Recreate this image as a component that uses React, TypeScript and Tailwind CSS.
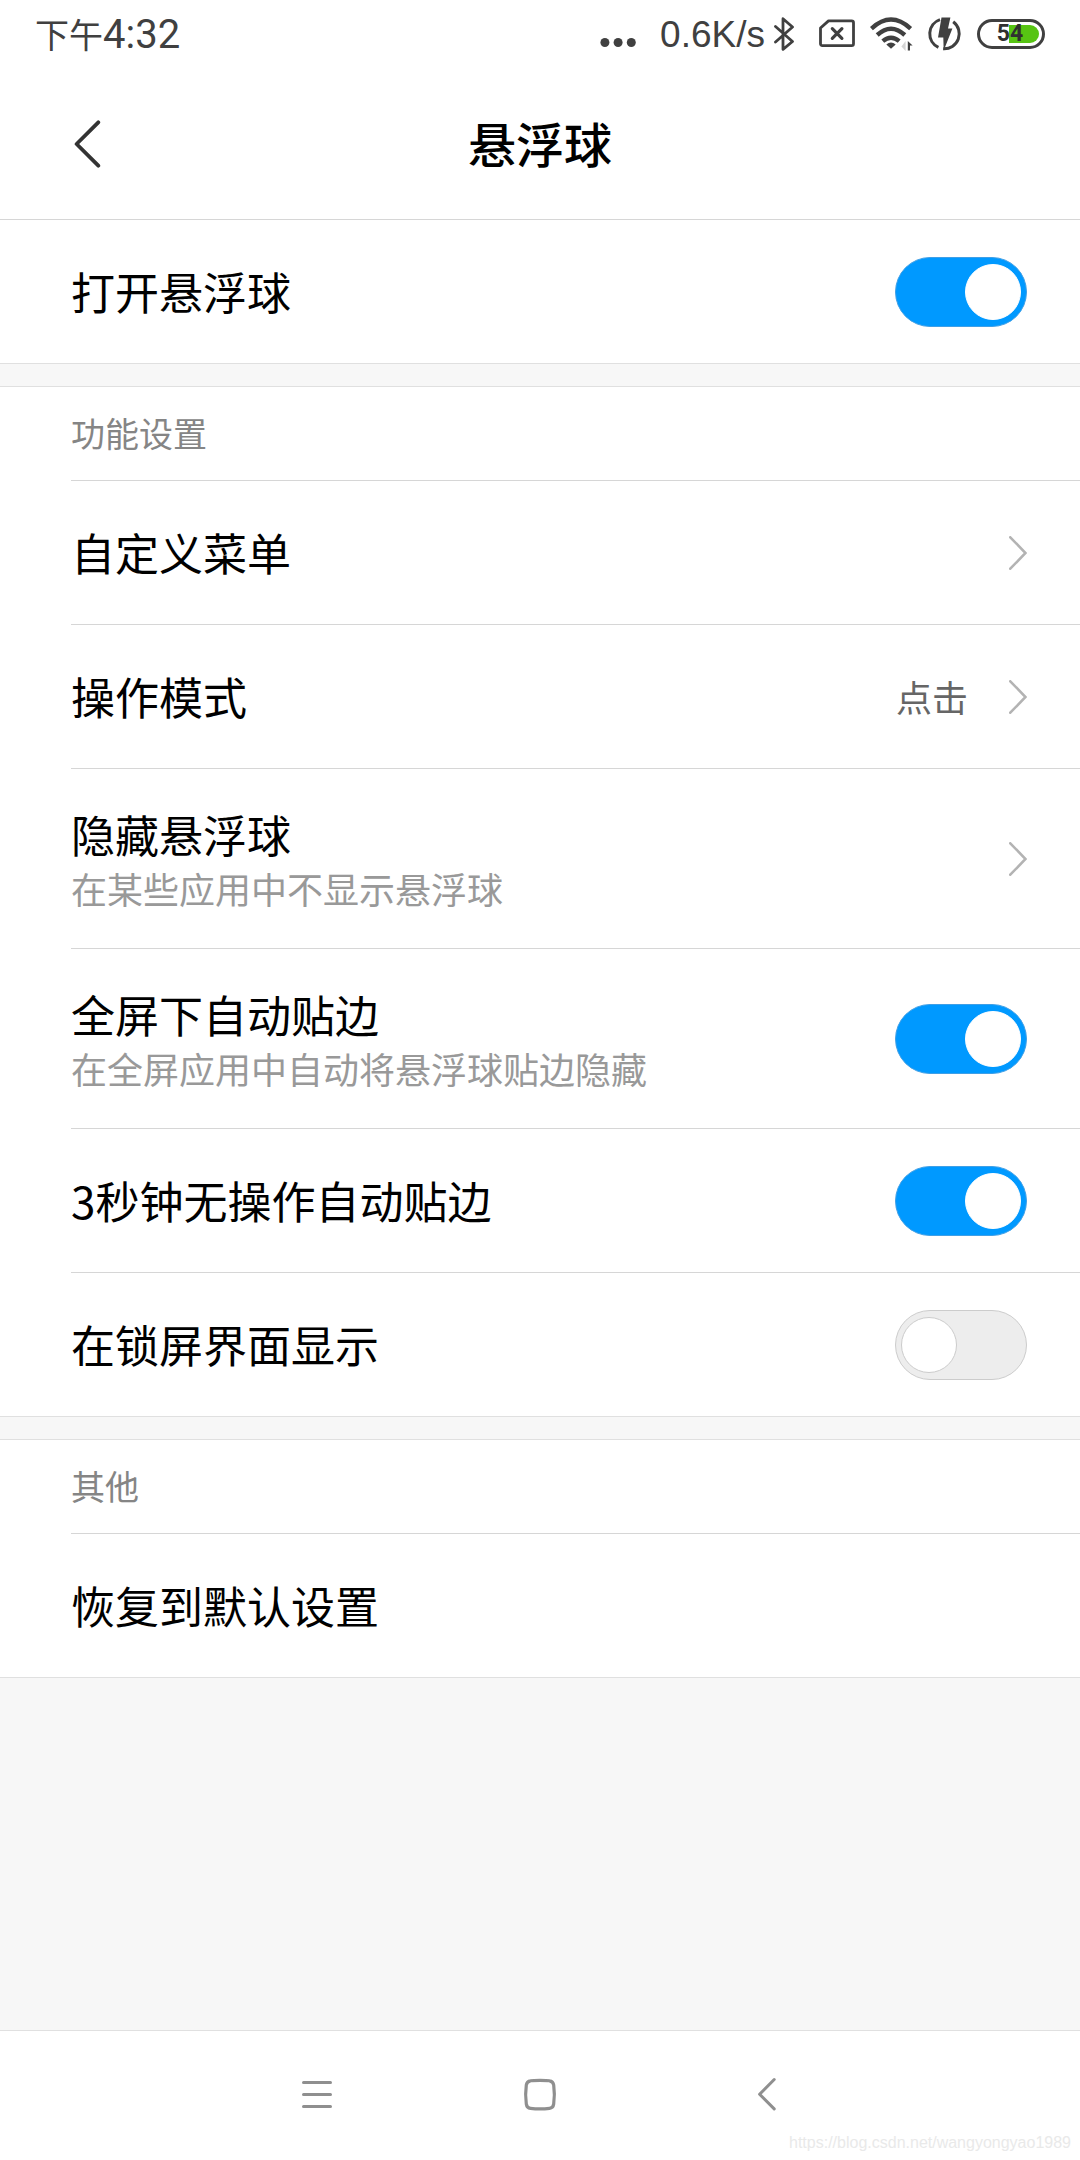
import React, { useState } from "react";

interface RowProps {
  title: string;
  description?: string;
}

interface LinkRowProps extends RowProps {
  value?: string;
  arrow?: boolean;
}

interface SwitchRowProps extends RowProps {
  defaultOn?: boolean;
}

function StatusBar() {
  return (
    <div className="flex h-[72px] items-center justify-between pl-[35px] pr-[35px] pb-[5px] text-[#404040]">
      <div className="flex items-baseline pt-0.5 text-[34px] leading-[48px]">
        <span>下午</span>
        <span className="font-[Roboto] text-[40px]">4:32</span>
      </div>

      <div className="flex items-center">
        {/* MORE NOTIFICATIONS */}
        <svg width="36" height="34" viewBox="0 0 36 34" fill="currentColor" className="mr-[24px]">
          <circle cx="4.9" cy="25.5" r="4.5" />
          <circle cx="18.1" cy="25.5" r="4.5" />
          <circle cx="31.3" cy="25.5" r="4.5" />
        </svg>

        <span className="mr-[9px] pt-0.5 font-['Liberation_Sans'] text-[37px] leading-[48px]">
          0.6K/s
        </span>

        {/* BLUETOOTH */}
        <svg
          width="20"
          height="34"
          viewBox="0 0 20 34"
          fill="none"
          stroke="currentColor"
          strokeWidth="2.8"
          strokeLinecap="round"
          strokeLinejoin="round"
          className="mr-[25px]"
        >
          <path d="M1.5 9.5 18.5 24.5 9 32.3V1.7L18.5 10 1.5 25" />
        </svg>

        {/* NO SIM */}
        <svg
          width="36"
          height="34"
          viewBox="0 0 36 34"
          fill="none"
          stroke="currentColor"
          strokeWidth="2.8"
          strokeLinejoin="round"
          className="mr-[15px]"
        >
          <path d="M9.5 3.9H32.6Q34.5 3.9 34.5 5.8V26.7Q34.5 28.6 32.6 28.6H3.4Q1.5 28.6 1.5 26.7V11Z" />
          <path d="M13.3 11.7 22.9 21.3M22.9 11.7 13.3 21.3" strokeWidth="3.2" strokeLinecap="round" />
        </svg>

        {/* WIFI */}
        <svg
          width="43"
          height="34"
          viewBox="0 0 43 34"
          fill="none"
          stroke="currentColor"
          strokeWidth="4.4"
          className="mr-[15px]"
        >
          <path d="M1.4 11.6Q21 -6.5 40.6 11.6" />
          <path d="M7.2 18Q21 5.5 34.8 18" />
          <path d="M12.8 24.2Q21 17.2 29.2 24.2" />
          <path d="M16.3 27.4Q21 23.8 25.7 27.4L21 31.8Z" fill="currentColor" stroke="none" />
          <path d="M35.6 24V34L31.4 29.5Z" fill="#d4d4d4" stroke="none" />
          <path d="M37.8 33.5V24L42.6 28.6H40V33.5Z" fill="currentColor" stroke="none" />
        </svg>

        {/* FAST CHARGE */}
        <svg
          width="34"
          height="34"
          viewBox="0 0 34 34"
          fill="none"
          stroke="currentColor"
          strokeWidth="3"
          className="mr-[15px]"
        >
          <path d="M12 2.6A15 15 0 0 0 10.4 30.4" />
          <path d="M25.2 4.8A15 15 0 0 1 15.2 31.8" />
          <path d="M13.5 .5H22.4L20 11.5H24.4L15.7 33.5L15.3 20.5H10Z" fill="currentColor" stroke="none" />
        </svg>

        {/* BATTERY */}
        <div className="relative flex h-[30px] w-[68px] items-center justify-center rounded-full border-3 border-[#404040]">
          <div className="absolute inset-y-[3px] left-[29px] right-[3px] rounded-r-full bg-[#57c413]" />
          <span className="relative mr-[2px] font-[Roboto] text-[23px] leading-[24px] font-bold text-[#303030]">
            54
          </span>
        </div>
      </div>
    </div>
  );
}

function RowText({ title, description }: RowProps) {
  return (
    <span className="flex flex-col pb-0.5">
      <span className="text-[44px] leading-[60px] text-black">{title}</span>
      {description && (
        <span className="text-[36px] leading-[48px] text-[#999999]">{description}</span>
      )}
    </span>
  );
}

function LinkRow({ title, description, value, arrow = true }: LinkRowProps) {
  return (
    <li>
      <button
        type="button"
        className={`flex w-full items-center justify-between pr-[53px] text-left ${
          description ? "h-[179px]" : "h-[143px]"
        }`}
      >
        <RowText title={title} description={description} />
        <span className="flex items-center gap-[41px]">
          {value && (
            <span className="pb-0.5 text-[36px] leading-[48px] text-[#666666]">{value}</span>
          )}
          {arrow && (
            <svg
              width="18"
              height="34"
              viewBox="0 0 18 34"
              fill="none"
              stroke="#b3b3b3"
              strokeWidth="2.6"
              strokeLinecap="round"
            >
              <path d="M1.3 1.3 16.5 17 1.3 32.7" />
            </svg>
          )}
        </span>
      </button>
    </li>
  );
}

function SwitchRow({ title, description, defaultOn = false }: SwitchRowProps) {
  const [on, setOn] = useState(defaultOn);

  return (
    <li>
      <label
        className={`flex cursor-pointer items-center justify-between pr-[53px] ${
          description ? "h-[179px]" : "h-[143px]"
        }`}
      >
        <RowText title={title} description={description} />
        <input
          type="checkbox"
          role="switch"
          checked={on}
          onChange={(e) => setOn(e.target.checked)}
          className="flex h-[70px] w-[132px] shrink-0 cursor-pointer appearance-none items-center rounded-full border border-[#cccccc] bg-[#ededed] px-[5px] before:size-[56px] before:rounded-full before:border before:border-[#cccccc] before:bg-white checked:justify-end checked:border-[#3f9fe6] checked:bg-[#0099ff] checked:before:border-white"
        />
      </label>
    </li>
  );
}

function Section({ label, children }: { label?: string; children: React.ReactNode }) {
  return (
    <section className="border-b border-[#e0e0e0] bg-white pl-[71px]">
      {label && (
        <h2 className="flex h-[94px] items-center border-b border-[#d6d6d6] pb-0.5 text-[34px] leading-[48px] text-[#858585]">
          {label}
        </h2>
      )}
      <ul className="divide-y divide-[#d6d6d6]">{children}</ul>
    </section>
  );
}

export default function App() {
  return (
    <div className="relative flex min-h-screen flex-col bg-[#f7f7f7] font-['Noto_Sans_CJK_SC',sans-serif]">
      <header className="border-b border-[#d6d6d6] bg-white">
        <StatusBar />
        <div className="grid h-[147px] grid-cols-[1fr_auto_1fr] items-center pb-1">
          <button type="button" aria-label="返回" className="ml-[74px] w-[27px]">
            <svg
              width="27"
              height="48"
              viewBox="0 0 27 48"
              fill="none"
              stroke="#333333"
              strokeWidth="3.8"
              strokeLinecap="round"
              strokeLinejoin="round"
            >
              <path d="M24.3 2.3 2.6 24 24.3 45.7" />
            </svg>
          </button>
          <h1 className="pb-1 text-[48px] leading-[60px] font-medium text-black">悬浮球</h1>
        </div>
      </header>

      <main className="flex-1">
        <Section>
          <SwitchRow title="打开悬浮球" defaultOn />
        </Section>

        <div className="mt-[22px] border-t border-[#e0e0e0]">
          <Section label="功能设置">
            <LinkRow title="自定义菜单" />
            <LinkRow title="操作模式" value="点击" />
            <LinkRow title="隐藏悬浮球" description="在某些应用中不显示悬浮球" />
            <SwitchRow
              title="全屏下自动贴边"
              description="在全屏应用中自动将悬浮球贴边隐藏"
              defaultOn
            />
            <SwitchRow title="3秒钟无操作自动贴边" defaultOn />
            <SwitchRow title="在锁屏界面显示" />
          </Section>
        </div>

        <div className="mt-[22px] border-t border-[#e0e0e0]">
          <Section label="其他">
            <LinkRow title="恢复到默认设置" arrow={false} />
          </Section>
        </div>
      </main>

      {/* SYSTEM NAVIGATION */}
      <nav className="flex h-[130px] justify-center border-t border-[#e0e0e0] bg-white pb-0.5 text-[#8f8f8f]">
        <button type="button" aria-label="菜单" className="flex w-[225px] items-center justify-center">
          <svg width="36" height="36" viewBox="0 0 36 36" fill="none" stroke="currentColor" strokeWidth="3" strokeLinecap="round">
            <path d="M6.5 5.5H33.5M6.5 17.5H33.5M6.5 29.5H33.5" />
          </svg>
        </button>
        <button type="button" aria-label="主页" className="flex w-[225px] items-center justify-center">
          <svg width="36" height="36" viewBox="0 0 36 36" fill="none" stroke="currentColor" strokeWidth="3.2">
            <path d="M18 3.3C22 3.3 25.5 3.4 27.5 3.8Q31.2 4.3 31.7 8C32.4 13 32.4 22 31.7 27Q31.2 30.9 27.5 31.3C22 31.9 14 31.9 8.5 31.3Q4.8 30.9 4.3 27C3.6 22 3.6 13 4.3 8Q4.8 4.3 8.5 3.8C10.5 3.4 14 3.3 18 3.3Z" />
          </svg>
        </button>
        <button type="button" aria-label="后退" className="flex w-[225px] items-center justify-center">
          <svg
            width="36"
            height="36"
            viewBox="0 0 36 36"
            fill="none"
            stroke="currentColor"
            strokeWidth="3"
            strokeLinecap="round"
            strokeLinejoin="round"
          >
            <path d="M27.2 2.5 12.6 17.2 27.2 31.9" />
          </svg>
        </button>
      </nav>

      <p className="absolute right-[9px] bottom-[5px] font-['Liberation_Sans'] text-base text-[#e9e9e9]">
        https://blog.csdn.net/wangyongyao1989
      </p>
    </div>
  );
}
